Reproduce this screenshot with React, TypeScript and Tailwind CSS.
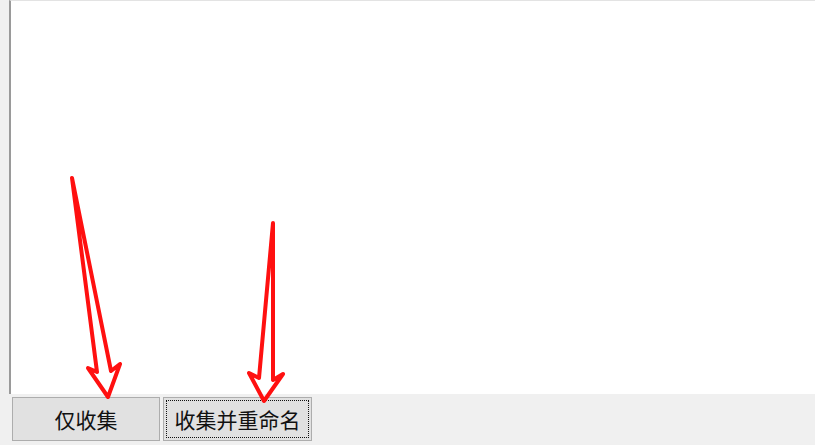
export default function App() {
  return (
    <div
      className="relative flex h-[445px] w-[815px] flex-col overflow-hidden bg-[#f0f0f0]"
      style={{ fontFamily: '"Noto Sans CJK SC", "Noto Sans", sans-serif' }}
    >
      <div className="ml-[9px] h-[394px] border-l-2 border-t border-l-[#9a9a9a] border-t-[#e3e3e3] bg-white" />
      <div className="flex gap-[3px] pl-[12px] pt-[3px]">
        <button className="flex h-[44px] w-[148px] items-center justify-center border border-[#adadad] bg-[#e1e1e1] text-[21px] leading-none text-[#111]">
          仅收集
        </button>
        <button className="flex h-[44px] w-[149px] items-center justify-center border border-[#adadad] bg-[#e1e1e1] p-[2px]">
          <span className="flex h-full w-full items-center justify-center border border-dotted border-[#111] text-[21px] leading-none text-[#111]">
            收集并重命名
          </span>
        </button>
      </div>
      <svg
        className="pointer-events-none absolute left-0 top-0"
        width="815"
        height="445"
        viewBox="0 0 815 445"
      >
        <polygon
          points="72,178 97,372 88,368 108,397 120,364 111,371"
          fill="none"
          stroke="#ff1010"
          strokeWidth="4"
          strokeLinejoin="round"
        />
        <polygon
          points="273,223 259,378 249,373 264,401 283,374 273,380"
          fill="none"
          stroke="#ff1010"
          strokeWidth="4"
          strokeLinejoin="round"
        />
      </svg>
    </div>
  );
}
